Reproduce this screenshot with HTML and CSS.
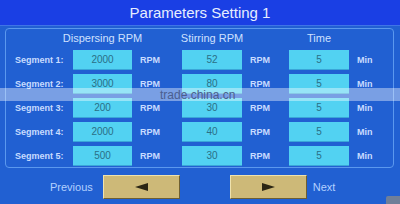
FILE: index.html
```html
<!DOCTYPE html>
<html>
  <head>
    <link rel="stylesheet" href="styles.css">
  </head>
  <body>
    <div class="screen">
      <div class="title-bar">Parameters Setting 1</div>

      <div class="panel">
        <div class="param-grid">
          <div></div>
          <div class="col-head">Dispersing RPM</div>
          <div></div>
          <div class="col-head">Stirring RPM</div>
          <div></div>
          <div class="col-head">Time</div>
          <div></div>

          <div class="seg-label">Segment 1:</div>
          <div class="value-box">2000</div>
          <div class="unit">RPM</div>
          <div class="value-box">52</div>
          <div class="unit">RPM</div>
          <div class="value-box">5</div>
          <div class="unit">Min</div>

          <div class="seg-label">Segment 2:</div>
          <div class="value-box">3000</div>
          <div class="unit">RPM</div>
          <div class="value-box">80</div>
          <div class="unit">RPM</div>
          <div class="value-box">5</div>
          <div class="unit">Min</div>

          <div class="seg-label">Segment 3:</div>
          <div class="value-box">200</div>
          <div class="unit">RPM</div>
          <div class="value-box">30</div>
          <div class="unit">RPM</div>
          <div class="value-box">5</div>
          <div class="unit">Min</div>

          <div class="seg-label">Segment 4:</div>
          <div class="value-box">2000</div>
          <div class="unit">RPM</div>
          <div class="value-box">40</div>
          <div class="unit">RPM</div>
          <div class="value-box">5</div>
          <div class="unit">Min</div>

          <div class="seg-label">Segment 5:</div>
          <div class="value-box">500</div>
          <div class="unit">RPM</div>
          <div class="value-box">30</div>
          <div class="unit">RPM</div>
          <div class="value-box">5</div>
          <div class="unit">Min</div>
        </div>
      </div>

      <div class="nav-bar">
        <span class="nav-text">Previous</span>
        <button class="nav-button prev-button"><span class="arrow-left"></span></button>
        <button class="nav-button next-button"><span class="arrow-right"></span></button>
        <span class="nav-text">Next</span>
      </div>

      <div class="corner-icon"></div>
      <div class="watermark">trade.china.cn</div>
    </div>
  </body>
</html>
```

FILE: styles.css
```css
/* HMI parameter screen */
body {
  margin: 0;
  font-family: "Liberation Sans", Arial, sans-serif;
}

.screen {
  position: relative;
  width: 400px;
  height: 204px;
  overflow: hidden;
  background-color: #2160d2;
}

.title-bar {
  height: 25px;
  line-height: 25px;
  text-align: center;
  font-size: 15px;
  color: #e6eeff;
  background-color: #1a3fe4;
  border-bottom: 1px solid #3f74e6;
}

.panel {
  margin: 2px 6px 0 5px;
  height: 140px;
  border: 1px solid #5b98ee;
  border-radius: 4px;
  padding-top: 2px;
  box-sizing: border-box;
}

.param-grid {
  display: grid;
  grid-template-columns: 67px 59px 50px 60px 47px 60px 1fr;
  grid-template-rows: 15px repeat(5, 20px);
  row-gap: 4px;
}

.col-head {
  justify-self: center;
  white-space: nowrap;
  font-size: 11px;
  line-height: 15px;
  color: #cfe0ff;
}

.seg-label {
  padding-left: 9px;
  font-size: 9px;
  font-weight: bold;
  line-height: 20px;
  color: #c9dcff;
  white-space: nowrap;
}

.value-box {
  background-color: #52d2f2;
  border-bottom: 1px solid #3aa6d8;
  box-sizing: border-box;
  text-align: center;
  font-size: 10px;
  line-height: 20px;
  color: #2b6f86;
}

.unit {
  padding-left: 8px;
  font-size: 9px;
  font-weight: bold;
  line-height: 20px;
  color: #c9dcff;
}

.nav-bar {
  display: flex;
  align-items: center;
  height: 34px;
  padding-left: 50px;
  padding-top: 3px;
  box-sizing: border-box;
}

.nav-text {
  font-size: 11px;
  color: #b3d0ff;
}

.nav-button {
  width: 77px;
  height: 24px;
  padding: 0;
  background-color: #cdb978;
  border: 1px solid;
  border-color: #efe2ad #6e5f32 #6e5f32 #efe2ad;
  display: flex;
  align-items: center;
  justify-content: center;
}

.prev-button {
  margin-left: 10px;
}

.next-button {
  margin-left: 50px;
  margin-right: 6px;
}

.arrow-left {
  width: 0;
  height: 0;
  border-top: 4px solid transparent;
  border-bottom: 4px solid transparent;
  border-right: 13px solid #2b2614;
}

.arrow-right {
  width: 0;
  height: 0;
  border-top: 4px solid transparent;
  border-bottom: 4px solid transparent;
  border-left: 13px solid #2b2614;
}

.corner-icon {
  position: absolute;
  right: 0;
  bottom: 0;
  width: 14px;
  height: 8px;
  background-color: #6f7f99;
  border-top-left-radius: 2px;
}

.watermark {
  position: absolute;
  left: 0;
  top: 88px;
  width: 100%;
  height: 13px;
  background-color: rgba(255, 255, 255, 0.4);
  padding-left: 160px;
  box-sizing: border-box;
  font-size: 12px;
  line-height: 15px;
  color: #4b5e8e;
}
```
